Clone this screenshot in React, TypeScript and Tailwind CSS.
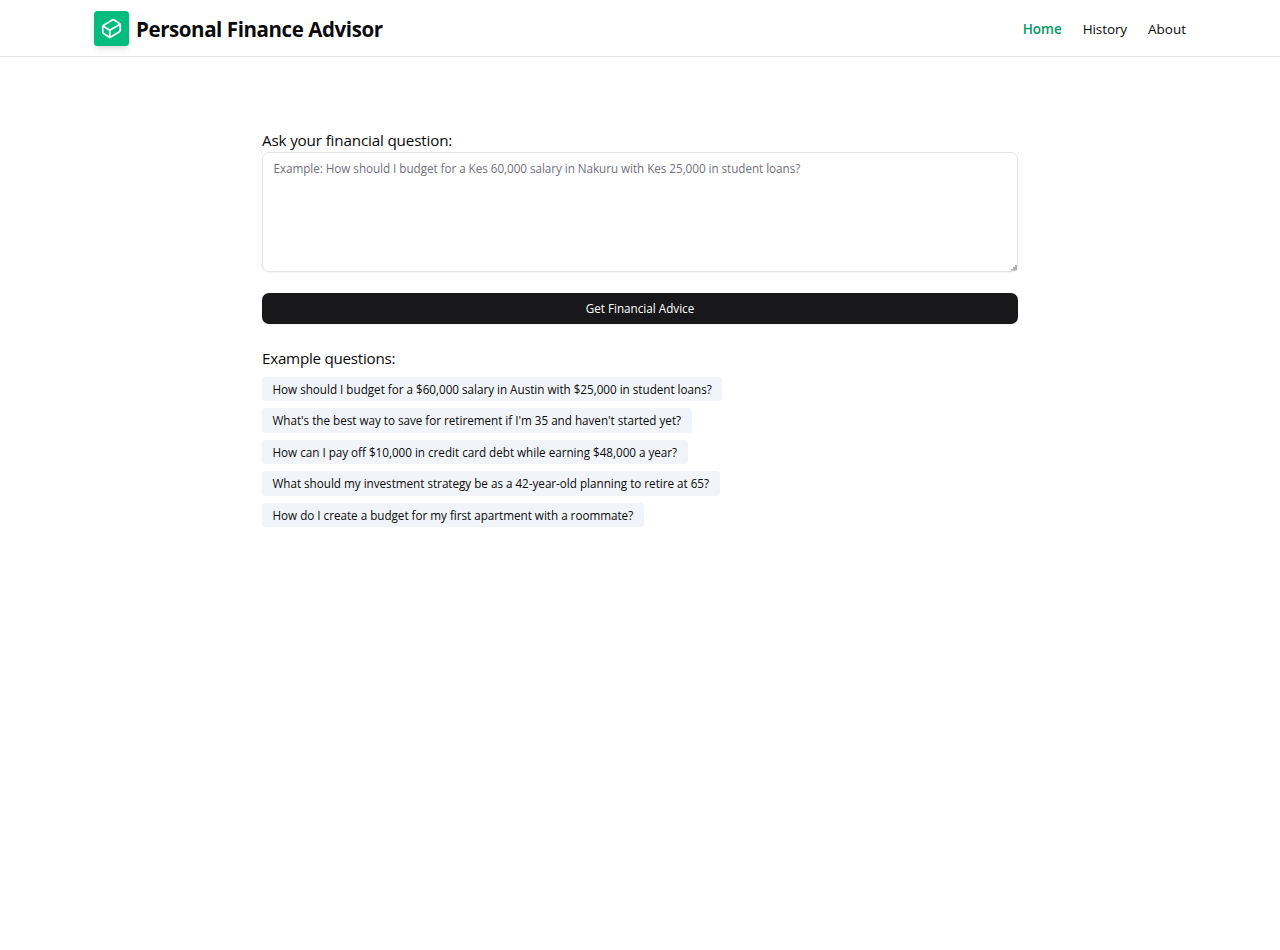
import { Cuboid } from "lucide-react";

const questions = [
  "How should I budget for a $60,000 salary in Austin with $25,000 in student loans?",
  "What's the best way to save for retirement if I'm 35 and haven't started yet?",
  "How can I pay off $10,000 in credit card debt while earning $48,000 a year?",
  "What should my investment strategy be as a 42-year-old planning to retire at 65?",
  "How do I create a budget for my first apartment with a roommate?",
];

function Logo() {
  return (
    <div className="flex size-[35px] items-center justify-center rounded-[3.5px] bg-[#00bc7d] shadow-md">
      <Cuboid className="size-[21px] text-white" />
    </div>
  );
}

export default function App() {
  return (
    <div className="min-h-[950px] bg-white font-['Open_Sans',sans-serif] text-[#0a0a0a]">
      <header className="h-[57px] border-b border-[#e4e4e7]">
        <div className="flex h-14 items-center justify-between px-[94px]">
          <div className="flex items-center gap-[7px]">
            <Logo />
            <h1 className="pt-[2px] text-[20.5px] font-bold tracking-[-0.42px]">Personal Finance Advisor</h1>
          </div>
          <nav className="flex gap-[21px] pt-[2px] text-[13.5px]">
            <a className="font-semibold text-[#009966]">Home</a>
            <a className="tracking-[-0.1px]">History</a>
            <a>About</a>
          </nav>
        </div>
      </header>
      <main className="mx-auto w-[756px] pt-[72px]">
        <label className="block text-[15.2px] leading-[23px] tracking-[-0.15px]">Ask your financial question:</label>
        <div className="relative">
          <textarea
            className="block h-[120px] w-full resize-none rounded-[7px] border border-[#e4e4e7] px-[10.5px] py-[7px] text-[11.7px] leading-[17.5px] tracking-[-0.045px] shadow-xs placeholder:text-[#71717b]"
            placeholder="Example: How should I budget for a Kes 60,000 salary in Nakuru with Kes 25,000 in student loans?"
          />
          <svg className="absolute right-px bottom-px size-[6px]" viewBox="0 0 6 6" fill="#a3a3a3">
            <path d="M4 0h2v2H4zM2 2h4v2H2zM0 4h6v1.5H0z" opacity="0.85" />
          </svg>
        </div>
        <button className="mt-[21px] block h-[31px] w-full rounded-[7px] bg-[#18181b] pt-px text-[11.7px] text-white shadow-xs">Get Financial Advice</button>
        <h2 className="mt-[23px] text-[15.2px] leading-[23px] tracking-[-0.25px]">Example questions:</h2>
        <ul className="mt-[6.5px] flex flex-col items-start gap-[7px]">
          {questions.map((q) => (
            <li key={q} className="h-[24.5px] rounded-[3.5px] bg-[#f1f5f9] px-[10.5px] text-[11.7px] leading-[25px] tracking-[-0.02px]">{q}</li>
          ))}
        </ul>
      </main>
    </div>
  );
}
